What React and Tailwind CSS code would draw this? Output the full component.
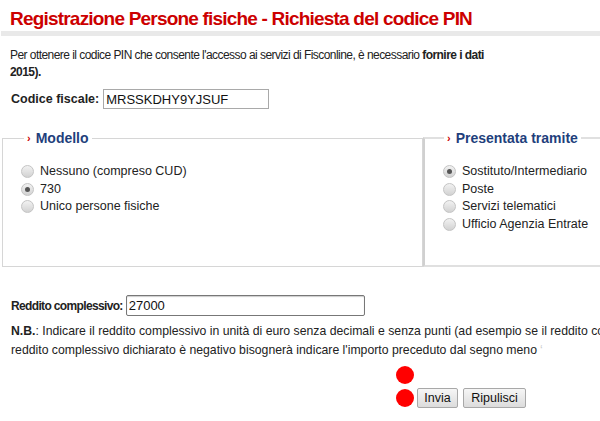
import React from "react";

function Radio({ checked, label }) {
  return (
    <div className="flex h-[17.5px] items-center">
      <span className="relative flex h-[13px] w-[13px] items-center justify-center rounded-full border border-[#c4c4c4] bg-gradient-to-b from-[#f2f2f2] to-[#d2d2d2]">
        {checked && <span className="h-[5px] w-[5px] rounded-full bg-[#555]" />}
      </span>
      <span className="ml-[6px] text-[12.5px] text-[#222]">{label}</span>
    </div>
  );
}

function Legend({ children, className }) {
  return (
    <legend className={"flex items-center px-[3px] text-[14px] font-bold leading-[18px] text-[#1f3f7c] " + className}>
      <span className="mr-[5px] text-[11px] font-bold text-[#cc0000]">›</span>
      {children}
    </legend>
  );
}

export default function App() {
  return (
    <div className="h-[421px] w-[600px] overflow-hidden bg-white font-['Liberation_Sans',Arial,sans-serif] text-[12.5px] text-[#222]">
      <h1 className="h-[31px] whitespace-nowrap pl-[10px] pt-[6px] text-[19px] font-bold leading-[26px] tracking-[-0.8px] text-[#cc0000]">
        Registrazione Persone fisiche - Richiesta del codice PIN
      </h1>
      <div className="ml-[1px] h-[5px] bg-[#e9e9e9]" />
      <p className="mt-[11px] pl-[10px] text-[12px] leading-[17px] tracking-[-0.55px]">
        Per ottenere il codice PIN che consente l'accesso ai servizi di Fisconline, è necessario <b>fornire i dati</b>
        <br />
        <b>2015).</b>
      </p>
      <div className="mt-[8px] flex items-center pl-[11px]">
        <b>Codice fiscale:</b>
        <input
          readOnly
          value="MRSSKDHY9YJSUF"
          className="ml-[4px] h-[20px] w-[166px] border border-[#a9a9a9] px-[2px] text-[13px] text-[#111] outline-none"
        />
      </div>
      <div className="mt-[20px] flex w-[800px]">
        <fieldset className="ml-[2px] h-[138px] w-[421px] border border-[#d6d6d6] pl-[18px]">
          <Legend className="ml-[3px]">Modello</Legend>
          <div className="pt-[16px]">
            <Radio label="Nessuno (compreso CUD)" />
            <Radio checked label="730" />
            <Radio label="Unico persone fisiche" />
          </div>
        </fieldset>
        <fieldset className="h-[138px] flex-1 border-2 border-l-[#d0d0d0] border-t-[#e0e0e0] border-b-[#e0e0e0] border-r-transparent pl-[18px]">
          <Legend className="ml-[1px]">Presentata tramite</Legend>
          <div className="pt-[16px]">
            <Radio checked label="Sostituto/Intermediario" />
            <Radio label="Poste" />
            <Radio label="Servizi telematici" />
            <Radio label="Ufficio Agenzia Entrate" />
          </div>
        </fieldset>
      </div>
      <div className="mt-[28px] flex items-center pl-[11px]">
        <b className="text-[12px] tracking-[-0.65px]">Reddito complessivo:</b>
        <input
          readOnly
          value="27000"
          className="ml-[3px] h-[21px] w-[239px] rounded-[2px] border border-[#777] px-[2px] text-[13px] text-[#111] shadow-[inset_0_1px_1px_rgba(0,0,0,0.2)] outline-none"
        />
      </div>
      <div className="mt-[6px] whitespace-nowrap pl-[11px] text-[12.25px] leading-[19px]">
        <div>
          <b>N.B.</b>: Indicare il reddito complessivo in unità di euro senza decimali e senza punti (ad esempio se il reddito complessivo è pari a 10.500,40 indicare 10500). Se il
        </div>
        <div>
          reddito complessivo dichiarato è negativo bisognerà indicare l'importo preceduto dal segno meno
          <span className="ml-[3px] text-[#ccc]">‘</span>
        </div>
      </div>
      <div className="ml-[396px] mt-[6px] flex flex-col">
        <span className="h-[18px] w-[18px] rounded-full bg-[#ff0000]" />
        <div className="mt-[4px] flex items-center">
          <span className="h-[18px] w-[18px] rounded-full bg-[#ff0000]" />
          <button className="ml-[3px] h-[20px] w-[41px] rounded-[2px] border border-[#a8a8a8] bg-gradient-to-b from-[#f6f6f6] to-[#dcdcdc] text-[12.5px] leading-[18px] text-[#111]">
            Invia
          </button>
          <button className="ml-[5px] h-[20px] w-[63px] rounded-[2px] border border-[#a8a8a8] bg-gradient-to-b from-[#f6f6f6] to-[#dcdcdc] text-[12.5px] leading-[18px] text-[#111]">
            Ripulisci
          </button>
        </div>
      </div>
    </div>
  );
}
